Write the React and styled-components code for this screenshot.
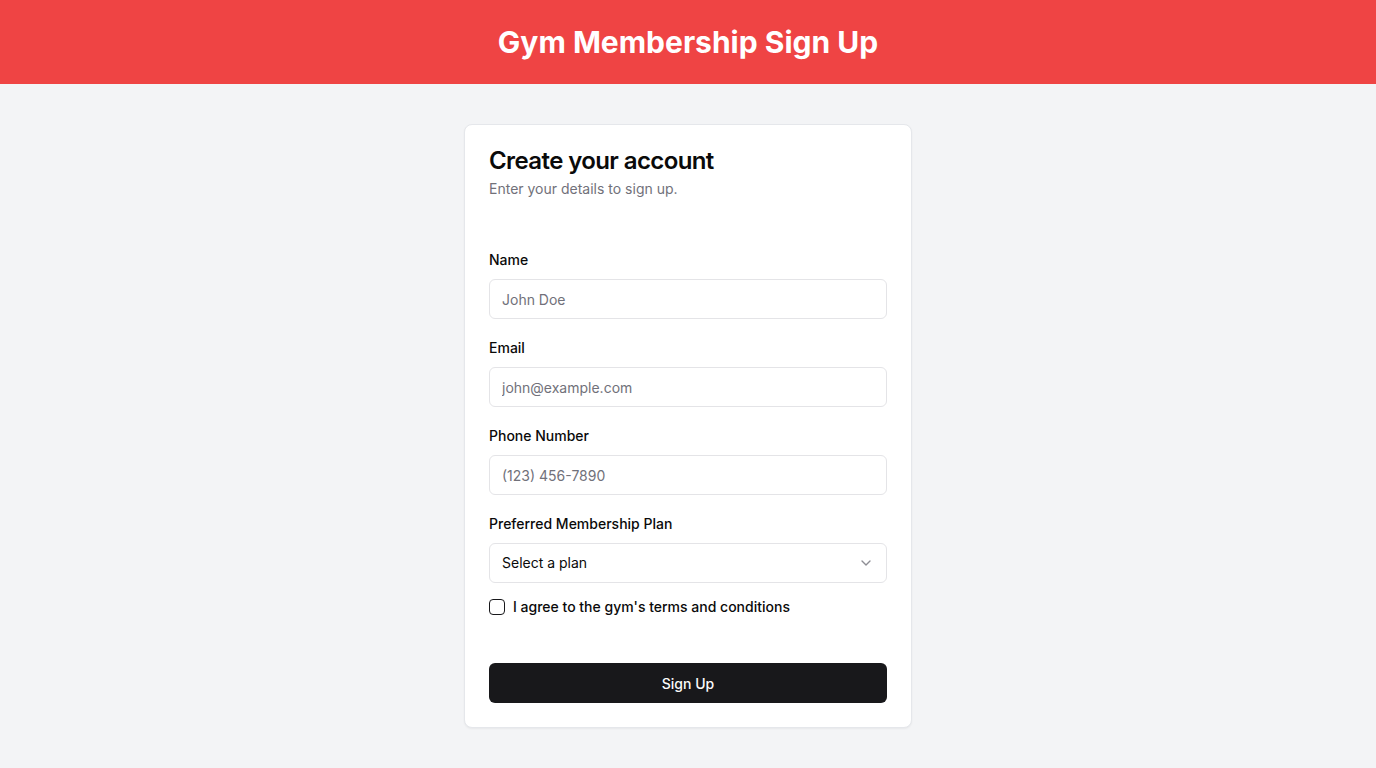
import React from "react";
import styled, { createGlobalStyle } from "styled-components";

const Global = createGlobalStyle`
  * { box-sizing: border-box; }
  body { margin: 0; font-family: Inter, "Noto Sans", sans-serif; background: #f3f4f6; color: #0a0a0a; }
`;

const Page = styled.div`
  min-height: 768px;
  background: #f3f4f6;
`;

const Header = styled.header`
  background: #ef4444;
  padding: 24px 16px;
  text-align: center;
`;

const HeaderTitle = styled.h1`
  margin: 0;
  color: #fff;
  font-size: 30px;
  line-height: 36px;
  font-weight: 700;
`;

const Main = styled.main`
  display: flex;
  justify-content: center;
  padding: 40px 16px;
`;

const Card = styled.div`
  width: 448px;
  background: #fff;
  border: 1px solid #e5e7eb;
  border-radius: 8px;
  box-shadow: 0 1px 2px rgba(0, 0, 0, 0.05);
`;

const CardHeader = styled.div`
  display: flex;
  flex-direction: column;
  gap: 6px;
  padding: 24px;
`;

const CardTitle = styled.h2`
  margin: 0;
  font-size: 24px;
  line-height: 24px;
  font-weight: 600;
  letter-spacing: -0.6px;
  color: #0a0a0a;
`;

const CardDesc = styled.p`
  margin: 0;
  font-size: 14px;
  line-height: 20px;
  color: #71717a;
`;

const CardContent = styled.div`
  display: flex;
  flex-direction: column;
  gap: 16px;
  padding: 24px;
`;

const Field = styled.div`
  display: flex;
  flex-direction: column;
  gap: 8px;
`;

const Label = styled.label`
  font-size: 14px;
  line-height: 22px;
  margin-top: 2px;
  font-weight: 500;
  color: #0a0a0a;
`;

const Input = styled.input`
  height: 40px;
  width: 100%;
  border: 1px solid #e4e4e7;
  border-radius: 6px;
  padding: 0 12px;
  font-family: inherit;
  font-size: 14px;
  color: #0a0a0a;
  background: #fff;
  outline: none;
  &::placeholder { color: #71717a; }
`;

const SelectBox = styled.button`
  height: 40px;
  width: 100%;
  border: 1px solid #e4e4e7;
  border-radius: 6px;
  padding: 0 12px;
  background: #fff;
  display: flex;
  align-items: center;
  justify-content: space-between;
  font-family: inherit;
  font-size: 14px;
  line-height: 18px;
  color: #0a0a0a;
  cursor: pointer;
`;

const CheckRow = styled.div`
  display: flex;
  align-items: center;
  gap: 8px;
  height: 16px;
`;

const Check = styled.span`
  width: 16px;
  height: 16px;
  border: 1px solid #18181b;
  border-radius: 4px;
  flex-shrink: 0;
`;

const CheckLabel = styled.label`
  font-size: 14px;
  line-height: 16px;
  font-weight: 500;
  color: #0a0a0a;
`;

const CardFooter = styled.div`
  padding: 24px;
`;

const Button = styled.button`
  width: 100%;
  height: 40px;
  border: none;
  border-radius: 6px;
  background: #18181b;
  color: #fafafa;
  font-family: inherit;
  font-size: 14px;
  font-weight: 500;
  cursor: pointer;
`;

export default function App() {
  return (
    <Page>
      <Global />
      <Header>
        <HeaderTitle>Gym Membership Sign Up</HeaderTitle>
      </Header>
      <Main>
        <Card>
          <CardHeader>
            <CardTitle>Create your account</CardTitle>
            <CardDesc>Enter your details to sign up.</CardDesc>
          </CardHeader>
          <CardContent>
            <Field>
              <Label>Name</Label>
              <Input placeholder="John Doe" />
            </Field>
            <Field>
              <Label>Email</Label>
              <Input placeholder="john@example.com" />
            </Field>
            <Field>
              <Label>Phone Number</Label>
              <Input placeholder="(123) 456-7890" />
            </Field>
            <Field>
              <Label>Preferred Membership Plan</Label>
              <SelectBox type="button">
                <span>Select a plan</span>
                <svg width="16" height="16" viewBox="0 0 24 24" fill="none" stroke="#71717a" strokeWidth="2" strokeLinecap="round" strokeLinejoin="round" style={{ opacity: 0.8 }}>
                  <path d="m6 9 6 6 6-6" />
                </svg>
              </SelectBox>
            </Field>
            <CheckRow>
              <Check />
              <CheckLabel>I agree to the gym's terms and conditions</CheckLabel>
            </CheckRow>
          </CardContent>
          <CardFooter>
            <Button>Sign Up</Button>
          </CardFooter>
        </Card>
      </Main>
    </Page>
  );
}
